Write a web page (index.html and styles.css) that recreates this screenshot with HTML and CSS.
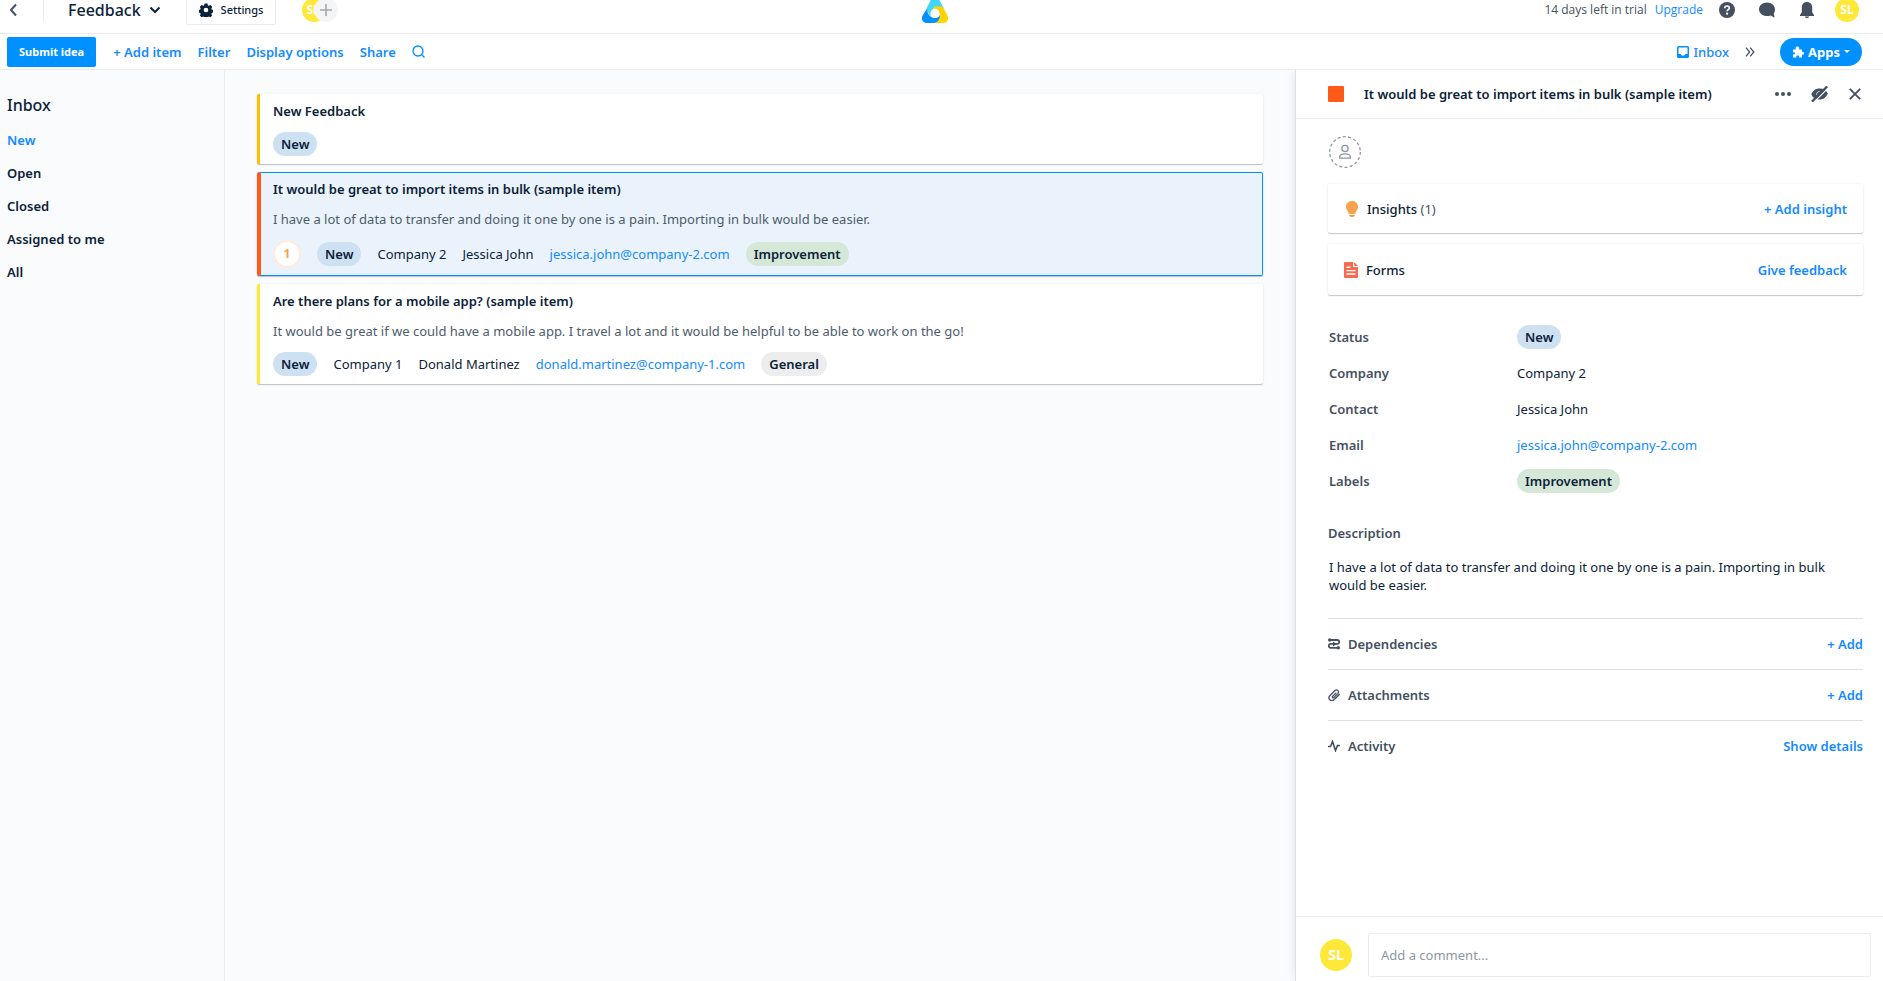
FILE: index.html
```html
<!DOCTYPE html>
<html lang="en">
<head>
<meta charset="utf-8">
<title>Feedback</title>
<link rel="stylesheet" href="styles.css">
</head>
<body>
<div class="app">
  <header class="topbar">
    <div class="topbar-left">
      <button class="icon-btn back" aria-label="Back"><svg width="8" height="14" viewBox="0 0 8 14"><path d="M6 1.500 1 7l5 5.500" fill="none" stroke="#44546a" stroke-width="2"/></svg></button>
      <button class="board-name">Feedback <svg width="12" height="8" viewBox="0 0 12 8"><path d="m1.500 1.500 4.500 4.500 4.500-4.500" fill="none" stroke="#0b2239" stroke-width="2"/></svg></button>
      <button class="settings"><svg width="14" height="14" viewBox="0 0 24 24"><path fill="#0b2239" fill-rule="evenodd" d="M9.500 1h5l.7 3 1.600.8 2.900-1.200 3 3-1.500 2.700.6 1.700 2.700 1v4l-2.700 1-.8 1.700 1.500 2.800-3 3-2.800-1.400-1.600.7-.8 2.900h-4.600l-.9-2.900-1.600-.7-2.800 1.400-3-3 1.500-2.800-.8-1.700-2.600-1v-4l2.600-1 .7-1.700-1.400-2.700 3-3 2.900 1.200 1.600-.8zM12 8a4 4 0 1 0 0 8 4 4 0 0 0 0-8z"/></svg>Settings</button>
      <div class="members"><span class="avatar avatar-sm">SL</span><button class="add-member" aria-label="Add member"><svg width="12" height="12" viewBox="0 0 12 12"><path d="M6 0v12M0 6h12" stroke="#a3a8ae" stroke-width="1.600"/></svg></button></div>
    </div>
    <a class="logo" href="#" aria-label="Home"><svg width="26" height="26" viewBox="0 0 26 26"><path fill="#3fd5ff" d="M13 0c1.500 0 3 .8 3.800 2.200L22 11.500 14 13l-6 6-3.500-7.500L9.200 2.200C10 .8 11.500 0 13 0z"/><path fill="#ffd200" d="M10.500 11.300C12 9.500 16 8.500 20.800 10l4.600 8.600c1.800 3.600.2 7.400-4.400 7.400h-9.500c4-1.200 6.200-4 6.500-8.500z"/><path fill="#0091ff" d="M5.200 11.300C5 17 8.500 21 13 21c2.600 0 4.400-1.500 5-3.500.2 4.500-2.200 8.500-6.500 8.500H5c-4.600 0-6.200-3.800-4.400-7.400z"/><circle cx="13" cy="16.400" r="4.600" fill="#fff"/></svg></a>
    <div class="topbar-right">
      <span class="trial">14 days left in trial</span>
      <a class="upgrade" href="#">Upgrade</a>
      <button class="icon-btn" aria-label="Help"><svg width="16" height="16" viewBox="0 0 16 16"><circle cx="8" cy="8" r="8" fill="#44505f"/><path d="M5.700 6.200C5.700 4.700 6.700 4 8 4s2.300.8 2.300 2c0 1.600-2.200 1.700-2.200 3.300" fill="none" stroke="#fff" stroke-width="1.700"/><circle cx="8.100" cy="11.700" r="1.100" fill="#fff"/></svg></button>
      <button class="icon-btn" aria-label="Chat"><svg width="16" height="16" viewBox="0 0 16 16"><path fill="#44505f" d="M8 .5c4.600 0 8 3 8 6.800 0 1.900-.6 3.300-1.200 4.300l.7 4.200-3.800-2.200c-1.200.4-2.300.5-3.700.5-4.600 0-8-3-8-6.800S3.400.5 8 .5z"/></svg></button>
      <button class="icon-btn" aria-label="Notifications"><svg width="16" height="16" viewBox="-1 0 16 16"><path fill="#44505f" d="M7 0c3.200 0 5.200 2.300 5.200 5.500v4.800L14 13v1H0v-1l1.800-2.700V5.500C1.800 2.300 3.800 0 7 0zM4.800 14.500h4.400c-.4 1-1.200 1.500-2.200 1.500s-1.800-.5-2.200-1.500z"/></svg></button>
      <span class="avatar avatar-sm">SL</span>
    </div>
  </header>

  <nav class="toolbar">
    <button class="submit">Submit idea</button>
    <button class="link">+ Add item</button>
    <button class="link">Filter</button>
    <button class="link">Display options</button>
    <button class="link">Share</button>
    <button class="icon-btn" aria-label="Search"><svg width="13" height="13" viewBox="0 0 13 13"><g fill="none" stroke="#0091ff" stroke-width="1.300"><circle cx="6" cy="6" r="5"/><path d="m9.800 9.800 2.700 2.700"/></g></svg></button>
    <div class="toolbar-right">
      <button class="link inbox-link"><svg width="12" height="12" viewBox="0 0 12 12"><path fill="#0091ff" fill-rule="evenodd" d="M1.500 0h9A1.500 1.500 0 0 1 12 1.500v9a1.500 1.500 0 0 1-1.500 1.500h-9A1.500 1.500 0 0 1 0 10.500v-9A1.500 1.500 0 0 1 1.500 0zm0 1.500V8h2.300C4 9 4.800 9.700 6 9.700S8 9 8.200 8h2.300V1.500z"/></svg>Inbox</button>
      <button class="icon-btn" aria-label="Collapse"><svg width="10" height="10" viewBox="0 0 10 10"><path d="m1 .7 3.600 4.300L1 9.300M5.200.7 8.800 5 5.200 9.300" fill="none" stroke="#44505f" stroke-width="1.300"/></svg></button>
      <button class="apps"><svg width="12" height="12" viewBox="0 0 24 24"><path fill="#fff" d="M8 7.200C7.300 6.500 7 5.600 7 4.500 7 2.300 8.700 1 10.800 1s3.700 1.300 3.700 3.500c0 1.100-.5 2-.9 2.700H20V12c.5-.3 1-.6 1.700-.6 1.500 0 2.300 1.500 2.300 3.100s-.8 3.100-2.300 3.100c-.7 0-1.200-.3-1.700-.6V23h-6c.3-.6.500-1 .5-1.700 0-1.500-1.300-2.500-3-2.500s-3 1-3 2.500c0 .7.200 1.100.5 1.700H2v-6.500c.6.300 1.300.5 2 .5 1.300 0 2-1 2-2.300S5.200 12.500 4 12.500c-.8 0-1.400.2-2 .5V7.200z"/></svg>Apps<svg width="6" height="4" viewBox="0 0 6 4"><path fill="#fff" d="M0 0h6L3 3z"/></svg></button>
    </div>
  </nav>

  <div class="body">
    <aside class="sidebar">
      <h1>Inbox</h1>
      <ul>
        <li><a class="current" href="#">New</a></li>
        <li><a href="#">Open</a></li>
        <li><a href="#">Closed</a></li>
        <li><a href="#">Assigned to me</a></li>
        <li><a href="#">All</a></li>
      </ul>
    </aside>

    <main class="list">
      <article class="card amber">
        <h2>New Feedback</h2>
        <div class="meta"><span class="pill blue">New</span></div>
      </article>
      <article class="card selected">
        <h2>It would be great to import items in bulk (sample item)</h2>
        <p>I have a lot of data to transfer and doing it one by one is a pain. Importing in bulk would be easier.</p>
        <div class="meta"><span class="count">1</span><span class="pill blue">New</span><span>Company 2</span><span>Jessica John</span><a href="#">jessica.john@company-2.com</a><span class="pill green">Improvement</span></div>
      </article>
      <article class="card yellow">
        <h2>Are there plans for a mobile app? (sample item)</h2>
        <p>It would be great if we could have a mobile app. I travel a lot and it would be helpful to be able to work on the go!</p>
        <div class="meta"><span class="pill blue">New</span><span>Company 1</span><span>Donald Martinez</span><a href="#">donald.martinez@company-1.com</a><span class="pill grey">General</span></div>
      </article>
    </main>

    <section class="panel">
      <header class="panel-head">
        <span class="swatch"></span>
        <h2>It would be great to import items in bulk (sample item)</h2>
        <button class="icon-btn" aria-label="More"><svg width="16" height="4" viewBox="0 0 16 4"><g fill="#44505f"><circle cx="2" cy="2" r="2"/><circle cx="8" cy="2" r="2"/><circle cx="14" cy="2" r="2"/></g></svg></button>
        <button class="icon-btn" aria-label="Unwatch"><svg width="18" height="16" viewBox="0 0 18 16"><path fill="#44505f" d="M.3 8.500C1.500 4.600 4.700 2.500 8.500 2.500c4.200 0 7 1.900 8.200 5-1.200 3.900-4.400 6-8.200 6C4.300 13.500 1.500 11.600.3 8.500z"/><path d="M5.500 8.800C5.500 6.800 6.900 5.500 8.600 5.500" fill="none" stroke="#fff" stroke-width=".8"/><path d="M2.400 16.700 17.700 1.500" stroke="#fff" stroke-width="1.200"/><path d="M1 15.500 16.200.5" stroke="#44505f" stroke-width="2.400"/></svg></button>
        <button class="icon-btn" aria-label="Close"><svg width="12" height="12" viewBox="0 0 12 12"><path d="m.8.8 10.400 10.400M11.200.8.8 11.200" stroke="#44505f" stroke-width="1.800"/></svg></button>
      </header>
      <div class="panel-body">
        <button class="assignee" aria-label="Assign"><svg width="32" height="32" viewBox="0 0 32 32"><g fill="none" stroke="#8d96a3" stroke-width="1.300"><circle cx="16" cy="16" r="15.300" stroke-dasharray="3 2.340"/><circle cx="16" cy="12.500" r="3.100"/><path d="M10.700 22.200v-1.400c0-2 1.800-3 5.300-3s5.300 1 5.300 3v1.400z"/></g></svg></button>
        <div class="box">
          <svg class="bulb" width="12" height="16" viewBox="0 0 12 16"><path fill="#f8a14f" d="M6 0c3.500 0 6 2.500 6 5.700 0 2.700-1.400 3.800-2.300 5.300L9.200 13H2.800l-.5-2C1.400 9.500 0 8.400 0 5.700 0 2.500 2.500 0 6 0zM2.800 14h6.400c0 1.200-1.300 2-3.200 2s-3.200-.8-3.200-2z"/></svg>
          <h3>Insights <span>(1)</span></h3><button class="link">+ Add insight</button>
        </div>
        <div class="box form-box">
          <svg width="14" height="16" viewBox="0 0 14 16"><path fill="#fa6a52" d="M1 0h8v5h5v10a1 1 0 0 1-1 1H1a1 1 0 0 1-1-1V1a1 1 0 0 1 1-1zm9.200 0L14 4h-3.800z"/><path d="M2.500 5.200h4M2.500 8.600h9M2.500 12h9" stroke="#fff" stroke-width="1.400"/></svg>
          <h3>Forms</h3><button class="link">Give feedback</button>
        </div>
        <dl class="fields">
          <dt>Status</dt><dd><span class="pill blue">New</span></dd>
          <dt>Company</dt><dd>Company 2</dd>
          <dt>Contact</dt><dd>Jessica John</dd>
          <dt>Email</dt><dd><a href="#">jessica.john@company-2.com</a></dd>
          <dt>Labels</dt><dd><span class="pill green">Improvement</span></dd>
        </dl>
        <h3 class="desc-title">Description</h3>
        <p class="desc">I have a lot of data to transfer and doing it one by one is a pain. Importing in bulk would be easier.</p>
        <div class="section"><svg width="12" height="12" viewBox="0 0 12 12"><path d="M1.500 2H9.300a1.900 1.900 0 0 1 0 3.900H2.700a1.900 1.900 0 0 0 0 3.900H10" fill="none" stroke="#44505f" stroke-width="1.800"/><circle cx="1.700" cy="2" r="1.700" fill="#44505f"/><circle cx="10.300" cy="9.800" r="1.700" fill="#44505f"/><path fill="#44505f" d="m5 3.400 3.800 2.500L5 8.400z"/></svg><h3>Dependencies</h3><button class="link">+ Add</button></div>
        <div class="section"><svg width="12" height="12" viewBox="0 0 12 12"><g fill="none" stroke="#44505f" stroke-width="1.300" stroke-linecap="round"><path d="M7.800 4.200 4.600 7.400a.8.800 0 0 0 1.200 1.200l4-4A2 2 0 0 0 7 1.500L1.800 6.700a2.900 2.900 0 0 0 4.100 4.100L11.300 5.500"/></g></svg><h3>Attachments</h3><button class="link">+ Add</button></div>
        <div class="section"><svg width="12" height="12" viewBox="0 0 12 12"><path d="M0 6.500h2.500L4.500 1.500 7.500 10.500 9.500 5.500H12" fill="none" stroke="#44505f" stroke-width="1.600"/></svg><h3>Activity</h3><button class="link">Show details</button></div>
      </div>
      <footer class="comment"><span class="avatar">SL</span><input type="text" aria-label="Add a comment" placeholder="Add a comment..."></footer>
    </section>
  </div>
</div>
</body>
</html>
```
FILE: styles.css
```css
* { box-sizing: border-box; }
body {
  margin: 0;
  background: #fff;
  color: #0b2239;
  font: 400 13px/18px "Noto Sans", "Open Sans", sans-serif;
}
h1, h2, h3, p, ul, dl, dd { margin: 0; padding: 0; }
h2, h3 { font-size: 13px; font-weight: 600; line-height: 18px; }
button {
  margin: 0; padding: 0; border: 0; background: none;
  font: inherit; color: inherit; cursor: pointer;
}
a { color: #148aff; text-decoration: none; }
svg { display: block; flex: none; }
.app { height: 100vh; display: flex; flex-direction: column; overflow: hidden; }

.topbar {
  flex: none; height: 48px; margin-top: -14px; padding: 0 24px 0 10px;
  display: grid; grid-template-columns: 1fr auto 1fr; align-items: center;
  border-bottom: 1px solid #ebecee;
}
.topbar-left, .topbar-right { display: flex; align-items: center; }
.topbar-right { justify-content: flex-end; gap: 24px; }
.topbar-right .avatar { margin-left: -4px; }
.board-name {
  display: flex; align-items: center; gap: 8px;
  margin-left: 25px; padding-left: 24px; height: 24px; border-left: 1px solid #ebecee;
  font-size: 16px; font-weight: 500;
}
.settings {
  display: flex; align-items: center; gap: 8px; height: 30px; padding: 0 12px;
  margin-left: 25px; border: 1px solid #ebecee; border-radius: 2px;
  font-size: 11px; font-weight: 500;
}
.avatar {
  flex: none; width: 32px; height: 32px; border-radius: 50%; background: #ffe838; color: #fff;
  display: flex; align-items: center; justify-content: center; font-size: 14px; font-weight: 700;
}
.avatar-sm { width: 24px; height: 24px; font-size: 12px; }
.members { display: flex; margin-left: 26px; }
.add-member {
  width: 24px; height: 24px; margin-left: -12px; border-radius: 50%; background: #f5f5f5;
  display: flex; align-items: center; justify-content: center;
}
.members .avatar { justify-content: flex-start; padding-left: 4px; }
.trial { font-family: "Open Sans", "Noto Sans", sans-serif; font-size: 12px; color: #44505f; }
.upgrade { font-family: "Open Sans", "Noto Sans", sans-serif; font-size: 12px; margin-left: -16px; margin-right: -8px; }

.toolbar {
  flex: none; height: 36px; padding: 0 21px 0 7px; display: flex; align-items: center; gap: 16px;
  border-bottom: 1px solid #ebecee;
}
.link { font-weight: 600; color: #148aff; white-space: nowrap; }
.submit {
  height: 30px; padding: 0 12px; margin-right: 1px; border-radius: 2px; background: #0091ff; color: #fff;
  font-size: 11px; font-weight: 700;
}
.toolbar-right { display: flex; align-items: center; margin-left: auto; gap: 16px; }
.inbox-link { display: flex; align-items: center; gap: 4px; font-weight: 500; }
.apps {
  display: flex; align-items: center; gap: 4px; height: 28px; padding: 0 12px; margin-left: 9px;
  border-radius: 14px; background: #0091ff; color: #fff; font-weight: 700;
}

.body { flex: 1; min-height: 0; display: flex; background: #fafbfd; }
.sidebar { flex: none; width: 225px; padding: 24px 7px; border-right: 1px solid #ebecee; }
.sidebar h1 { font-size: 16px; line-height: 22px; font-weight: 500; margin-bottom: 15px; }
.sidebar ul { list-style: none; display: grid; gap: 15px; }
.sidebar li { line-height: 18px; }
.sidebar a { color: #0b2239; font-weight: 600; }
.sidebar .current { color: #148aff; }

.list { flex: 1; min-width: 0; padding: 24px 32px; display: flex; flex-direction: column; gap: 8px; }
.card {
  padding: 8px 13px; border-left: 3px solid; border-radius: 2px; background: #fff;
  box-shadow: 0 1px 1px rgba(0, 0, 0, .22), 0 0 3px rgba(0, 0, 0, .06);
}
.amber { border-color: #ffbf00; }
.yellow { border-color: #ffe838; }
.selected { padding: 7px 12px; border: 1px solid #0091ff; border-left: 4px solid #ff5a1a; background: #eaf3fb; }
.card p { margin-top: 12px; color: #4d5c6c; }
.meta { display: flex; align-items: center; gap: 16px; height: 24px; margin-top: 12px; }
.selected .meta { height: 28px; }
.pill { display: inline-block; height: 24px; line-height: 24px; padding: 0 8px; border-radius: 12px; font-weight: 600; }
.blue { background: #cde1f3; }
.green { background: #d5e8d8; }
.grey { background: #ededed; }
.count {
  width: 28px; height: 28px; border: 2px solid #ffeadb; border-radius: 50%; background: #fff;
  color: #f8a14f; font-size: 12px; font-weight: 700; line-height: 24px; text-align: center;
}

.panel {
  flex: none; width: 588px; display: flex; flex-direction: column; background: #fff;
  border-left: 1px solid #dfe1e5; box-shadow: 0 0 10px rgba(0, 0, 0, .1); clip-path: inset(0 0 0 -12px);
}
.panel-head {
  flex: none; height: 49px; padding: 0 22px 0 32px; display: flex; align-items: center; gap: 20px;
  border-bottom: 1px solid #ebecee;
}
.panel-head h2 { flex: 1; }
.swatch { width: 16px; height: 16px; border-radius: 1px; background: #ff5a1a; }
.panel-body { flex: 1; min-height: 0; padding: 17px 20px 0 32px; }
.assignee { display: block; margin-left: 1px; }
.box {
  display: flex; align-items: center; gap: 8px; height: 49px; margin-top: 16px; padding: 0 16px; border-radius: 2px;
  box-shadow: 0 1px 1px rgba(0, 0, 0, .2), 0 0 3px rgba(0, 0, 0, .08);
}
.form-box { height: 51px; margin-top: 11px; }
.box h3 { font-weight: 500; }
.box h3 span { font-weight: 400; color: #44505f; }
.box .link, .section .link { margin-left: auto; }
.bulb { margin: 0 1px 0 2px; }
.fields {
  display: grid; grid-template-columns: 188px 1fr; grid-auto-rows: 36px; align-items: center;
  margin-top: 24px; padding-left: 1px;
}
dt, .desc-title, .section h3 { font-weight: 600; color: #44505f; }
.desc-title { margin-top: 25px; }
.desc { margin: 16px 0 24px; padding-left: 1px; }
.section { display: flex; align-items: center; gap: 8px; height: 51px; border-top: 1px solid #dcdee1; }
.comment {
  flex: none; height: 65px; padding: 16px 12px 4px 24px; display: flex; align-items: center; gap: 16px;
  border-top: 1px solid #ebecee;
}
.comment input {
  flex: 1; height: 44px; padding: 0 12px; border: 1px solid #ebecee; border-radius: 2px; font: inherit; color: inherit;
}
.comment input::placeholder { color: #8d96a3; }
```
